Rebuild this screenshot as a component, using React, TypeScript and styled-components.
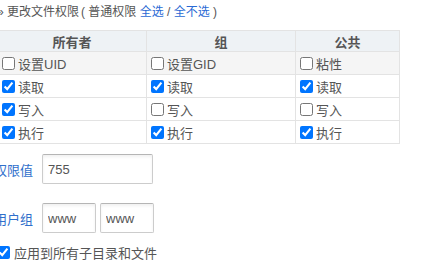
import React from "react";
import styled, { createGlobalStyle } from "styled-components";

const GlobalStyle = createGlobalStyle`
  html, body {
    margin: 0;
    padding: 0;
    background: #fff;
    overflow: hidden;
  }

  body {
    font-family: "Liberation Sans", "Noto Sans CJK SC", sans-serif;
    font-size: 12px;
    color: #555;
  }
`;

const Panel = styled.div`
  margin-left: -3px;
  width: 400px;
`;

const Title = styled.div`
  height: 24px;
  line-height: 24px;
  font-size: 12px;
  color: #555;
  white-space: nowrap;
`;

const Hint = styled.span`
  color: #555;
  margin-left: 2px;
`;

const Link = styled.a`
  color: #2a6ad4;
  text-decoration: none;
  cursor: pointer;
`;

const Table = styled.table`
  margin-top: 6px;
  border-collapse: collapse;
  table-layout: fixed;
  width: 399px;
  border: 1px solid #e3e3e3;
`;

const HeadCell = styled.th<{ $w: number }>`
  width: ${({ $w }) => $w}px;
  height: 20px;
  padding: 0;
  background: #eef2f5;
  border: 1px solid #e3e3e3;
  font-size: 13px;
  font-weight: bold;
  color: #555;
  text-align: center;
`;

const Row = styled.tr<{ $shade?: boolean }>`
  background: ${({ $shade }) => ($shade ? "#f5f5f5" : "#fff")};
`;

const Cell = styled.td`
  height: 22px;
  padding: 0;
  border: 1px solid #e3e3e3;
  font-size: 13px;
  color: #555;
  white-space: nowrap;
`;

const Check = styled.label`
  display: inline-flex;
  align-items: center;
  cursor: pointer;

  input {
    width: 13px;
    height: 13px;
    margin: 0 3px 0 4px;
  }
`;

const FieldRow = styled.div<{ $top: number }>`
  display: flex;
  align-items: center;
  margin-top: ${({ $top }) => $top}px;
`;

const FieldLabel = styled.div`
  width: 36px;
  margin-right: 9px;
  text-align: right;
  font-size: 13px;
  color: #2f6fcb;
  white-space: nowrap;
  direction: rtl;
`;

const TextInput = styled.input<{ $w: number }>`
  box-sizing: border-box;
  width: ${({ $w }) => $w}px;
  height: 30px;
  margin-right: 4px;
  padding: 0 5px;
  border: 1px solid #ccc;
  border-top-color: #b5b5b5;
  border-radius: 2px;
  box-shadow: inset 0 2px 3px rgba(0, 0, 0, 0.06);
  font-family: "Liberation Sans", sans-serif;
  font-size: 13px;
  color: #555;
  outline: none;
`;

const ApplyRow = styled.div`
  margin-top: 10px;
  font-size: 13px;
  color: #555;

  input {
    margin: 0 4px 0 0;
  }
`;

type Perm = { label: string; checked: boolean };

const rows: Perm[][] = [
  [
    { label: "设置UID", checked: false },
    { label: "设置GID", checked: false },
    { label: "粘性", checked: false },
  ],
  [
    { label: "读取", checked: true },
    { label: "读取", checked: true },
    { label: "读取", checked: true },
  ],
  [
    { label: "写入", checked: true },
    { label: "写入", checked: false },
    { label: "写入", checked: false },
  ],
  [
    { label: "执行", checked: true },
    { label: "执行", checked: true },
    { label: "执行", checked: true },
  ],
];

export default function App() {
  return (
    <>
      <GlobalStyle />
      <Panel>
        <Title>
          » 更改文件权限
          <Hint>
            ( 普通权限 <Link>全选</Link> / <Link>全不选</Link> )
          </Hint>
        </Title>

        <Table>
          <thead>
            <tr>
              <HeadCell $w={148}>所有者</HeadCell>
              <HeadCell $w={148}>组</HeadCell>
              <HeadCell $w={103}>公共</HeadCell>
            </tr>
          </thead>
          <tbody>
            {rows.map((row, i) => (
              <Row key={i} $shade={i === 0}>
                {row.map((p, j) => (
                  <Cell key={j}>
                    <Check>
                      <input type="checkbox" defaultChecked={p.checked} />
                      {p.label}
                    </Check>
                  </Cell>
                ))}
              </Row>
            ))}
          </tbody>
        </Table>

        <FieldRow $top={10}>
          <FieldLabel>权限值</FieldLabel>
          <TextInput $w={111} defaultValue="755" />
        </FieldRow>

        <FieldRow $top={19}>
          <FieldLabel>用户组</FieldLabel>
          <TextInput $w={54} defaultValue="www" />
          <TextInput $w={54} defaultValue="www" />
        </FieldRow>

        <ApplyRow>
          <Check>
            <input type="checkbox" defaultChecked />
            应用到所有子目录和文件
          </Check>
        </ApplyRow>
      </Panel>
    </>
  );
}
